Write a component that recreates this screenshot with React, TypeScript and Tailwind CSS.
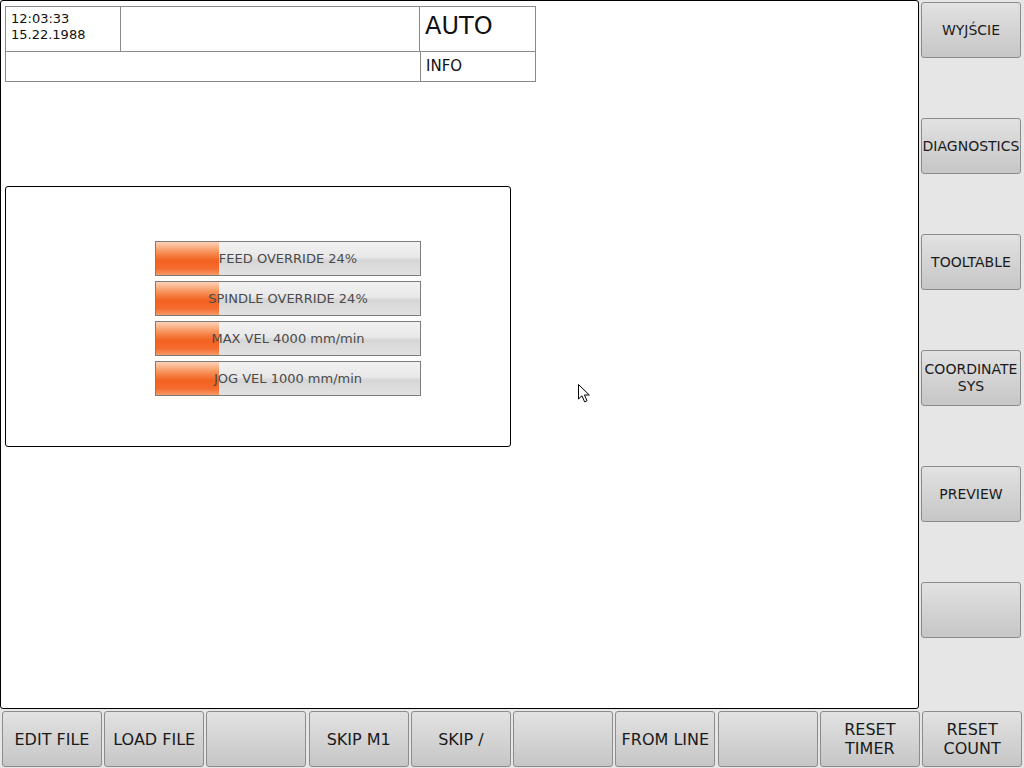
const sideButtons = ['WYJŚCIE', 'DIAGNOSTICS', 'TOOLTABLE', 'COORDINATE SYS', 'PREVIEW', ''];
const bottomButtons = ['EDIT FILE', 'LOAD FILE', '', 'SKIP M1', 'SKIP /', '', 'FROM LINE', '', 'RESET TIMER', 'RESET COUNT'];
const sliders = [
  'FEED OVERRIDE 24%',
  'SPINDLE OVERRIDE 24%',
  'MAX VEL 4000 mm/min',
  'JOG VEL 1000 mm/min',
];

function Btn({ label, className }: { label: string; className: string }) {
  return (
    <div
      className={`flex items-center justify-center text-center text-[#1a1a1a] border border-[#8c8c8c] rounded-[3px] bg-gradient-to-b from-[#e2e2e2] to-[#c6c6c6] ${className}`}
    >
      {label}
    </div>
  );
}

function Slider({ label }: { label: string }) {
  return (
    <div className="relative h-[35px] border border-[#7c7c7c] bg-[linear-gradient(to_bottom,#f2f2f2_0%,#e8e8e8_45%,#d6d6d6_55%,#e2e2e2_100%)]">
      <div className="absolute left-0 top-0 bottom-0 w-[63px] bg-[linear-gradient(to_bottom,#fdd3b6_0%,#f7925a_30%,#f26222_55%,#f46a2c_80%,#f79a68_100%)]" />
      <div className="relative flex h-full items-center justify-center text-[13px] text-[#4a4a4a]">{label}</div>
    </div>
  );
}

export default function App() {
  return (
    <div className="relative w-[1024px] h-[768px] bg-[#e6e6e6] font-['DejaVu_Sans',sans-serif] overflow-hidden flex flex-col">
      <div className="flex h-[709px]">
        {/* Main screen */}
        <div className="w-[919px] h-[709px] bg-white border border-black rounded-[3px] pt-[5px] pl-[4px]">
          <div className="w-[531px] border border-[#8a8a8a]">
            <div className="flex h-[45px] border-b border-[#8a8a8a]">
              <div className="w-[115px] border-r border-[#8a8a8a] pl-[5px] pt-[4px] text-[13px] leading-[16px] text-[#111]">
                <div>12:03:33</div>
                <div>15.22.1988</div>
              </div>
              <div className="w-[299px] border-r border-[#8a8a8a]" />
              <div className="flex-1 pl-[5px] pt-[4px] text-[24px] leading-[30px] text-[#111]">AUTO</div>
            </div>
            <div className="flex h-[29px]">
              <div className="w-[415px] border-r border-[#8a8a8a]" />
              <div className="flex-1 pl-[5px] flex items-center text-[15px] text-[#111]">INFO</div>
            </div>
          </div>

          <div className="mt-[104px] w-[506px] h-[261px] border border-black rounded-[3px] pt-[54px] pl-[149px]">
            <div className="w-[266px] flex flex-col gap-[5px]">
              {sliders.map((s) => (
                <Slider key={s} label={s} />
              ))}
            </div>
          </div>
        </div>

        {/* Right column */}
        <div className="flex flex-col gap-[60px] pl-[2px] pt-[2px]">
          {sideButtons.map((b, i) => (
            <Btn key={i} label={b} className="w-[100px] h-[56px] text-[14px] leading-[17px]" />
          ))}
        </div>
      </div>

      {/* Bottom row */}
      <div className="flex gap-[2.3px] pl-[2px] pr-[2px] pt-[2px]">
        {bottomButtons.map((b, i) => (
          <Btn key={i} label={b} className="flex-1 h-[56px] text-[16px] leading-[19px]" />
        ))}
      </div>

      {/* Mouse cursor */}
      <svg className="absolute left-[578px] top-[384px]" width="13" height="20" viewBox="0 0 13 20">
        <path d="M0.5 0.5 L0.5 15 L4 11.8 L6.6 17.8 L9 16.8 L6.5 11 L11.3 11 Z" fill="white" stroke="black" strokeWidth="1" />
      </svg>
    </div>
  );
}
